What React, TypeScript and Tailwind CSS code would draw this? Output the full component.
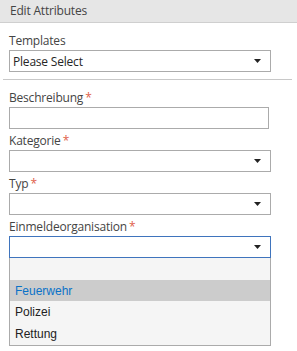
import React from "react";

const labelFont = { fontFamily: '"Segoe UI", "Open Sans", "Noto Sans", sans-serif', letterSpacing: "-0.2px" };

function Arrow() {
  return (
    <svg width="7" height="4" viewBox="0 0 7 4" className="block">
      <polygon points="0,0 7,0 3.5,4" fill="#222" />
    </svg>
  );
}

function Label({ text, required }: { text: string; required?: boolean }) {
  return (
    <div className="h-[21px] pt-[3px] text-[12px] leading-[17px] text-[#444] whitespace-nowrap" style={labelFont}>
      {text}
      {required && <span className="ml-[2px] text-[#e0604a]">*</span>}
    </div>
  );
}

function Select({ value, focused }: { value?: string; focused?: boolean }) {
  return (
    <div
      className={`flex h-[22px] w-[262px] items-center justify-between border bg-white pl-[3px] pr-[9px] ${
        focused ? "border-[#3f74bd]" : "border-[#ababab]"
      }`}
    >
      <span className="text-[12px] leading-[17px] text-[#262626]" style={labelFont}>
        {value ?? ""}
      </span>
      <Arrow />
    </div>
  );
}

export default function App() {
  return (
    <div className="h-[351px] w-[297px] bg-white">
      <div
        className="flex h-[23px] items-center border-b border-[#cfcfcf] bg-[#e6e6e6] pl-[10px] text-[12px] text-[#444]"
        style={labelFont}
      >
        Edit Attributes
      </div>
      <div className="px-[9px] pt-[6px]">
        <Label text="Templates" />
        <Select value="Please Select" />
      </div>
      <div className="ml-[3px] mt-[7px] h-px w-[289px] bg-[#c8c8c8]" />
      <div className="px-[9px] pt-[6px]">
        <Label text="Beschreibung" required />
        <div className="h-[22px] w-[260px] border border-[#ababab] bg-white" />
        <Label text="Kategorie" required />
        <Select />
        <Label text="Typ" required />
        <Select />
        <Label text="Einmeldeorganisation" required />
        <Select focused />
        <div
          className="w-[262px] border-x border-b border-[#ababab] bg-[#f5f5f5] text-[12px] text-[#222]"
          style={{ fontFamily: '"Liberation Sans", Arial, sans-serif' }}
        >
          <div className="h-[22px]" />
          <div className="flex h-[21px] items-center bg-[#cccccc] pl-[5px] text-[#0a72c8]">Feuerwehr</div>
          <div className="flex h-[22px] items-center pl-[5px]">Polizei</div>
          <div className="flex h-[22px] items-center pl-[5px]">Rettung</div>
        </div>
      </div>
    </div>
  );
}
